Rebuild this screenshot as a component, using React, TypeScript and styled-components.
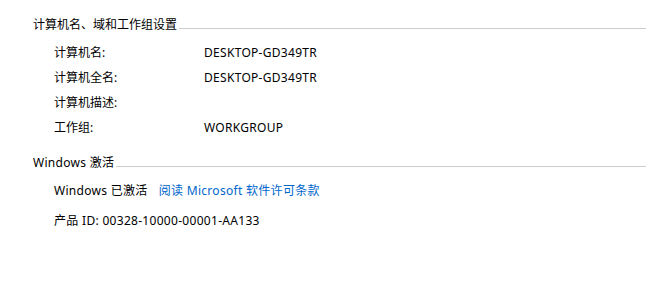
import styled, { createGlobalStyle } from "styled-components";

const GlobalStyle = createGlobalStyle`
  html, body {
    margin: 0;
    padding: 0;
    background: #ffffff;
  }
  body {
    font-family: "Noto Sans", "Noto Sans CJK SC", sans-serif;
    font-size: 12px;
    color: #000000;
  }
`;

const Page = styled.div`
  width: 647px;
  height: 294px;
  box-sizing: border-box;
  padding: 17px 1px 0 33px;
  display: flex;
  flex-direction: column;
`;

const Section = styled.section<{ $gap?: number }>`
  display: flex;
  flex-direction: column;
  margin-top: ${(p) => p.$gap ?? 0}px;
`;

const Header = styled.div<{ $latin?: boolean }>`
  display: flex;
  align-items: center;
  height: 16px;
  line-height: 16px;
  white-space: nowrap;
  letter-spacing: ${(p) => (p.$latin ? "0.3px" : "0")};
`;

const Rule = styled.div`
  flex: 1;
  height: 1px;
  margin: 6px 0 0 2px;
  background: #cccccc;
`;

const Body = styled.div<{ $top: number }>`
  display: flex;
  flex-direction: column;
  padding-left: 21px;
  margin-top: ${(p) => p.$top}px;
`;

const Row = styled.div<{ $gap?: number }>`
  display: flex;
  align-items: center;
  height: 25px;
  line-height: 25px;
  white-space: nowrap;
  margin-top: ${(p) => p.$gap ?? 0}px;
`;

const Label = styled.span`
  width: 150px;
  flex-shrink: 0;
`;

const Value = styled.span`
  letter-spacing: 0.3px;
`;

const Link = styled.a`
  color: #0066cc;
  text-decoration: none;
  margin-left: 11px;
  letter-spacing: 0.3px;
  cursor: pointer;
`;

const fields = [
  { label: "计算机名:", value: "DESKTOP-GD349TR" },
  { label: "计算机全名:", value: "DESKTOP-GD349TR" },
  { label: "计算机描述:", value: "" },
  { label: "工作组:", value: "WORKGROUP" },
];

export default function App() {
  return (
    <>
      <GlobalStyle />
      <Page>
        <Section>
          <Header>
            计算机名、域和工作组设置
            <Rule />
          </Header>
          <Body $top={7}>
            {fields.map((f) => (
              <Row key={f.label}>
                <Label>{f.label}</Label>
                <Value>{f.value}</Value>
              </Row>
            ))}
          </Body>
        </Section>

        <Section $gap={15}>
          <Header $latin>
            Windows 激活
            <Rule />
          </Header>
          <Body $top={7}>
            <Row>
              <Value>Windows 已激活</Value>
              <Link>阅读 Microsoft 软件许可条款</Link>
            </Row>
            <Row $gap={5}>
              <Value>产品 ID: 00328-10000-00001-AA133</Value>
            </Row>
          </Body>
        </Section>
      </Page>
    </>
  );
}
